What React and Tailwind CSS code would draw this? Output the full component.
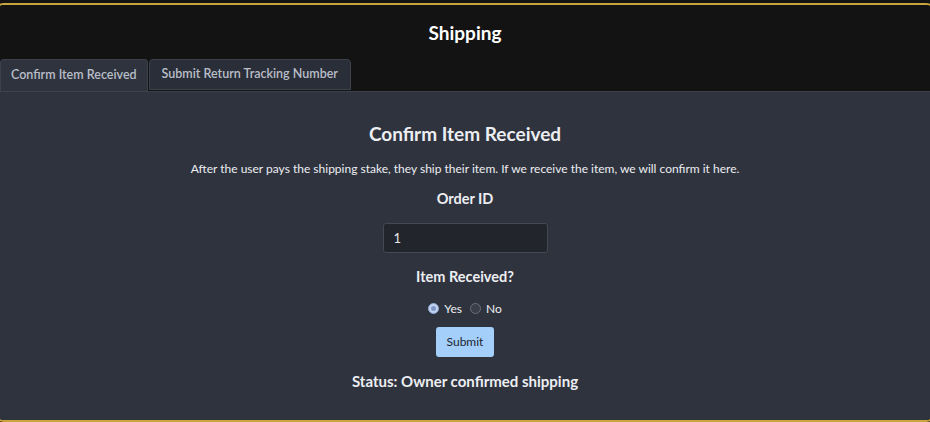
import React, { useState } from 'react';

const Radio = ({ checked, label, onClick }) => (
    <label className="flex items-center gap-[5px] cursor-pointer" onClick={onClick}>
        {checked ? (
            <span className="w-[11px] h-[11px] rounded-full border border-[#8fa8d6] bg-[#c5d3ee] flex items-center justify-center">
                <span className="w-[5px] h-[5px] rounded-full bg-[#7f98c8]" />
            </span>
        ) : (
            <span className="w-[11px] h-[11px] rounded-full border border-[#6b6f78] bg-[#3a3e48]" />
        )}
        <span>{label}</span>
    </label>
);

const App = () => {
    const [tab, setTab] = useState(0);
    const [received, setReceived] = useState(true);
    const [orderId, setOrderId] = useState('1');

    const tabs = ['Confirm Item Received', 'Submit Return Tracking Number'];

    return (
        <div className="w-[930px] h-[422px] overflow-hidden bg-[#131313] font-['Lato',sans-serif] pt-[3px]">
            <div className="ml-[-6px] w-[942px] h-[419px] border-2 border-[#c9a53d] rounded-[10px] overflow-hidden flex flex-col">
                <div className="bg-[#131313] flex flex-col">
                    <h1 className="text-white text-[19px] font-bold text-center pt-[14px] pb-[11px]">Shipping</h1>
                    <div className="flex pl-[4px]">
                        {tabs.map((t, i) => (
                            <button
                                key={t}
                                onClick={() => setTab(i)}
                                className={
                                    i === tab
                                        ? 'h-[32px] px-[10px] text-[12.5px] font-semibold text-[#b9bec8] bg-[#2f333e] border border-b-0 border-[#3c414c] rounded-t-[4px]'
                                        : 'h-[31px] px-[12px] text-[12.5px] font-semibold text-[#b9bec8] bg-[#2a2e38] border border-[#3c414c] rounded-t-[4px] ml-[1px]'
                                }
                            >
                                {t}
                            </button>
                        ))}
                    </div>
                </div>
                <div className="flex-1 bg-[#2f333e] border-t border-[#3c414c] flex flex-col items-center text-[#eceef2]">
                    <h2 className="text-[19px] font-bold mt-[28px]">Confirm Item Received</h2>
                    <p className="text-[12px] mt-[12px]">
                        After the user pays the shipping stake, they ship their item. If we receive the item, we will confirm it here.
                    </p>
                    <h3 className="text-[14.5px] font-bold mt-[10px]">Order ID</h3>
                    <input
                        value={orderId}
                        onChange={(e) => setOrderId(e.target.value)}
                        className="mt-[13px] w-[165px] h-[30px] px-[10px] text-[13px] text-[#e8eaee] bg-[#22252c] border border-[#444851] rounded-[3px] outline-none"
                    />
                    <h3 className="text-[14.5px] font-bold mt-[13px]">Item Received?</h3>
                    <div className="flex items-center gap-[8px] text-[12px] mt-[12px]">
                        <Radio checked={received} label="Yes" onClick={() => setReceived(true)} />
                        <Radio checked={!received} label="No" onClick={() => setReceived(false)} />
                    </div>
                    <button className="mt-[9px] w-[58px] h-[30px] text-[12px] text-[#1d2430] bg-[#a3cffa] rounded-[3px]">
                        Submit
                    </button>
                    <div className="text-[15px] font-bold mt-[13px]">Status: Owner confirmed shipping</div>
                </div>
            </div>
        </div>
    );
};

export default App;
